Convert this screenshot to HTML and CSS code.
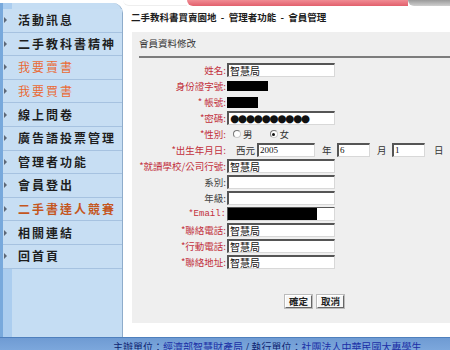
FILE: index.html
```html
<!DOCTYPE html>
<html lang="zh-Hant">
<head>
<meta charset="utf-8">
<title>會員管理</title>
<link rel="stylesheet" href="styles.css">
</head>
<body>
<div class="page">
  <aside class="side">
    <ul class="menu">
      <li class="item"><span class="arrow"></span>活動訊息</li>
      <li class="item"><span class="arrow"></span>二手教科書精神</li>
      <li class="item hot"><span class="arrow"></span>我要賣書</li>
      <li class="item hot"><span class="arrow"></span>我要買書</li>
      <li class="item"><span class="arrow"></span>線上問卷</li>
      <li class="item"><span class="arrow"></span>廣告語投票管理</li>
      <li class="item"><span class="arrow"></span>管理者功能</li>
      <li class="item"><span class="arrow"></span>會員登出</li>
      <li class="item contest"><span class="arrow"></span>二手書達人競賽</li>
      <li class="item"><span class="arrow"></span>相關連結</li>
      <li class="item"><span class="arrow"></span>回首頁</li>
    </ul>
  </aside>
  <main class="main">
    <div class="banner"><div class="banner-gap"></div><div class="banner-pink"></div><div class="banner-knob"></div></div>
    <div class="title">二手教科書買賣園地 &nbsp;-&nbsp; 管理者功能 &nbsp;-&nbsp; 會員管理</div>
    <section class="panel">
      <div class="panel-head">會員資料修改</div>
      <div class="form">
        <div class="lbl req">姓名:</div><div class="fld"><span class="inp">智慧局</span></div>
        <div class="lbl req">身份證字號:</div><div class="fld"><span class="redact r-id"></span></div>
        <div class="lbl req">* 帳號:</div><div class="fld"><span class="redact r-acc"></span></div>
        <div class="lbl req">*密碼:</div><div class="fld"><span class="inp pw">●●●●●●●●●●</span></div>
        <div class="lbl req">*性別:</div><div class="fld"><span class="radio"></span><span class="opt">男</span><span class="radio on"></span><span class="opt">女</span></div>
        <div class="lbl req">*出生年月日:</div><div class="fld"><span class="unit u-era">西元</span><span class="inp year">2005</span><span class="unit u-y">年</span><span class="inp md">6</span><span class="unit u-m">月</span><span class="inp md">1</span><span class="unit u-d">日</span></div>
        <div class="lbl req">*就讀學校/公司行號:</div><div class="fld"><span class="inp">智慧局</span></div>
        <div class="lbl">系別:</div><div class="fld"><span class="inp"></span></div>
        <div class="lbl">年級:</div><div class="fld"><span class="inp"></span></div>
        <div class="lbl req mono">*Email:</div><div class="fld"><span class="inp mail"><span class="redact r-mail"></span></span></div>
        <div class="lbl req">*聯絡電話:</div><div class="fld"><span class="inp">智慧局</span></div>
        <div class="lbl req">*行動電話:</div><div class="fld"><span class="inp">智慧局</span></div>
        <div class="lbl req">*聯絡地址:</div><div class="fld"><span class="inp">智慧局</span></div>
      </div>
      <div class="actions"><span class="btn">確定</span><span class="btn">取消</span></div>
    </section>
  </main>
  <footer class="foot">主辦單位：<span class="flink">經濟部智慧財產局</span> / 執行單位：<span class="flink">社團法人中華民國大專學生</span></footer>
</div>
</body>
</html>
```

FILE: styles.css
```css
html, body {
  margin: 0;
  padding: 0;
}
body {
  width: 450px;
  height: 350px;
  overflow: hidden;
  background: #fff;
  font-family: "Noto Sans CJK TC", "Noto Sans", sans-serif;
  color: #222;
}
.page {
  display: grid;
  grid-template-columns: 123px 327px;
  grid-template-rows: 337px 13px;
}

/* sidebar */
.side {
  padding-top: 3px;
  box-sizing: border-box;
  height: 337px;
}
.menu {
  list-style: none;
  margin: 0;
  padding: 6px 0 0 0;
  height: 100%;
  box-sizing: border-box;
  border-left: 3px solid #78a9dc;
  border-right: 1px solid #8eaccb;
  border-radius: 0 10px 0 0;
  background: linear-gradient(to right, #abcdef 0 9px, #c5ddf3 9px);
}
.item {
  height: 22.6px;
  border-bottom: 1px solid #a6c2e0;
  background: #c7def3;
  display: flex;
  align-items: center;
  font-size: 12px;
  font-weight: bold;
  letter-spacing: 2px;
  line-height: 1;
  color: #1e1e1e;
  white-space: nowrap;
}
.arrow {
  width: 0;
  height: 0;
  border-left: 3px solid #5d6878;
  border-top: 3px solid transparent;
  border-bottom: 3px solid transparent;
  margin: 0 11px 0 1px;
}
.item.hot {
  color: #ea6a34;
  font-weight: normal;
}
.item.contest {
  color: #c4561e;
}

/* main */
.main {
  display: flex;
  flex-direction: column;
  height: 337px;
  min-width: 0;
}
.banner {
  display: flex;
  height: 6px;
}
.banner-gap {
  width: 64px;
  border-bottom: 1px solid #eee;
  border-radius: 0 0 0 8px;
}
.banner-pink {
  flex: 1;
  background: linear-gradient(to bottom, #f08c94, #e2606c);
  border-radius: 0 0 0 14px;
}
.banner-knob {
  width: 42px;
  background: linear-gradient(to bottom, #9a9a9a, #cfcfcf);
  border-radius: 0 0 0 18px;
}
.title {
  padding-left: 8px;
  line-height: 23px;
  height: 23px;
  padding-bottom: 3px;
  font-size: 9.5px;
  font-weight: bold;
  color: #1c1c1c;
  white-space: nowrap;
}
.panel {
  margin-left: 9px;
  height: 291px;
  box-sizing: border-box;
  background: #efefef;
  padding-left: 7px;
}
.panel-head {
  padding-top: 5px;
  line-height: 12px;
  height: 12px;
  padding-bottom: 7px;
  border-bottom: 2px solid #7c7c7c;
  font-size: 9.5px;
  color: #333;
}
.form {
  margin-top: 4px;
  display: grid;
  grid-template-columns: 87px 223px;
  column-gap: 1px;
  grid-auto-rows: 16px;
}
.lbl {
  text-align: right;
  font-size: 9.5px;
  line-height: 16px;
  color: #444;
  white-space: nowrap;
}
.lbl.req {
  color: #c2303c;
}
.lbl.mono {
  font-family: "Liberation Mono", "DejaVu Sans Mono", monospace;
  font-size: 9px;
}
.fld {
  display: flex;
  align-items: center;
  white-space: nowrap;
  min-width: 0;
}
.fld > * {
  flex-shrink: 0;
}
.inp {
  box-sizing: border-box;
  width: 108px;
  height: 14px;
  background: #fff;
  border-top: 2px solid #555;
  border-left: 2px solid #555;
  border-right: 1px solid #d8d8d8;
  border-bottom: 1px solid #d8d8d8;
  font-size: 10px;
  line-height: 11px;
  padding-left: 1px;
  color: #111;
  white-space: nowrap;
  overflow: hidden;
}
.inp.pw {
  font-family: "DejaVu Sans", sans-serif;
  font-size: 10.5px;
  letter-spacing: -1.3px;
  line-height: 11px;
}
.inp.year {
  width: 58px;
  font-family: "Liberation Serif", serif;
  font-size: 9px;
}
.inp.md {
  width: 33px;
  font-family: "Liberation Serif", serif;
  font-size: 9px;
}
.inp.mail {
  padding: 0;
  border-left-width: 1px;
  border-top-width: 1px;
}
.unit {
  box-sizing: border-box;
  font-size: 9.5px;
  line-height: 12px;
  color: #333;
}
.u-era {
  width: 30px;
  padding-left: 9px;
}
.u-y,
.u-m {
  width: 22px;
  padding-left: 7px;
}
.u-d {
  width: 20px;
  padding-left: 9px;
}
.redact {
  display: block;
  background: #000;
}
.r-id {
  width: 41px;
  height: 10px;
}
.r-acc {
  width: 31px;
  height: 11px;
}
.r-mail {
  width: 89px;
  height: 13px;
}
.radio {
  box-sizing: border-box;
  width: 8px;
  height: 8px;
  border-radius: 50%;
  border: 1px solid #777;
  border-right-color: #ccc;
  border-bottom-color: #ccc;
  background: #fff;
  margin-left: 6px;
  display: flex;
  align-items: center;
  justify-content: center;
}
.radio.on::after {
  content: "";
  width: 3px;
  height: 3px;
  border-radius: 50%;
  background: #111;
}
.radio.on {
  margin-left: 17px;
}
.opt {
  font-size: 9.5px;
  color: #333;
  margin-left: 2px;
}
.actions {
  margin-top: 25px;
  padding-left: 146px;
  display: flex;
  gap: 5px;
}
.btn {
  box-sizing: border-box;
  height: 13px;
  padding: 0 3px;
  background: #f6f6f6;
  border-top: 1px solid #fff;
  border-left: 1px solid #fff;
  border-right: 1px solid #666;
  border-bottom: 1px solid #666;
  box-shadow: 0 0 0 1px #bbb;
  font-size: 9.5px;
  font-weight: bold;
  line-height: 11px;
  color: #222;
}

/* footer */
.foot {
  grid-column: 1 / 3;
  background: linear-gradient(to bottom, #4f80bd 0 1px, #6f9bd3 1px, #7ca7dc);
  padding-left: 113px;
  padding-top: 4px;
  font-size: 10px;
  line-height: 12px;
  color: #0d1f70;
  white-space: nowrap;
  overflow: hidden;
}
.flink {
  color: #1b2fa6;
}
```
